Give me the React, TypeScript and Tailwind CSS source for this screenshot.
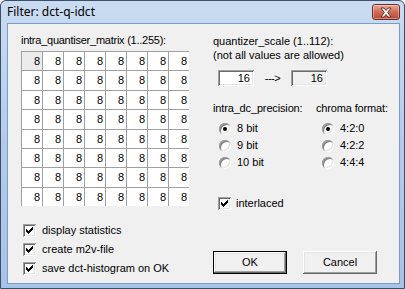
import React from "react";

const sunken =
  "shadow-[inset_1px_1px_0_#a0a0a0,inset_-1px_-1px_0_#ffffff,inset_2px_2px_0_#696969,inset_-2px_-2px_0_#e3e3e3]";

function CheckMark() {
  const px: [number, number, number][] = [
    [6, 0, 1],
    [5, 1, 2],
    [0, 2, 1],
    [4, 2, 3],
    [0, 3, 2],
    [3, 3, 3],
    [0, 4, 5],
    [1, 5, 3],
    [2, 6, 1],
  ];
  return (
    <svg width="7" height="7" viewBox="0 0 7 7" shapeRendering="crispEdges">
      {px.map(([x, y, w], i) => (
        <rect key={i} x={x} y={y} width={w} height={1} fill="#000" />
      ))}
    </svg>
  );
}

function CheckBox({ label, gap = "ml-[6px]" }: { label: string; gap?: string }) {
  return (
    <div className="flex h-[19px] items-center">
      <span className={`flex h-[13px] w-[13px] items-center justify-center bg-white ${sunken}`}>
        <CheckMark />
      </span>
      <span className={`${gap} leading-[13px]`}>{label}</span>
    </div>
  );
}

function Radio({ label, checked }: { label: string; checked?: boolean }) {
  return (
    <div className="flex h-[17px] items-center pl-[6px]">
      <span className="relative h-[12px] w-[12px] rounded-full bg-white shadow-[inset_1px_1px_0_#a0a0a0,inset_-1px_-1px_0_#ffffff,inset_2px_2px_0_#808080,inset_-2px_-2px_0_#e3e3e3]">
        {checked && (
          <span className="absolute left-[4px] top-[4px] h-[4px] w-[4px] rounded-full bg-black" />
        )}
      </span>
      <span className="ml-[6px] leading-[13px]">{label}</span>
    </div>
  );
}

function CloseIcon() {
  return (
    <svg width="14" height="11" viewBox="0 0 14 11">
      <path
        d="M2 1 L5 1 L7 3.5 L9 1 L12 1 L8.6 5.5 L12 10 L9 10 L7 7.5 L5 10 L2 10 L5.4 5.5 Z"
        fill="#ffffff"
        stroke="#5a2a22"
        strokeWidth="0.9"
        strokeLinejoin="round"
      />
    </svg>
  );
}

export default function App() {
  const rows = ["h-[19px]", "h-[20px]", "h-[19px]", "h-[20px]", "h-[19px]", "h-[19px]", "h-[20px]", "h-[19px]"];
  return (
    <div className="h-[289px] w-[405px] overflow-hidden bg-white">
      <div className="flex h-[289px] w-[405px] flex-col rounded-t-[6px] border border-[#3c4f68] bg-gradient-to-b from-[#cadcf2] via-[#b3cbea] to-[#a6c3e8] font-['Liberation_Sans',Arial,sans-serif] text-[11px] text-black">
        {/* Title bar */}
        <div className="flex h-[22px] items-center pl-[6px] pr-[4px]">
          <span className="font-['Noto_Sans',sans-serif] text-[12px] leading-[16px] text-black">
            Filter: dct-q-idct
          </span>
          <span className="ml-auto flex h-[16px] w-[28px] items-center justify-center rounded-[3px] border border-[#6b2f28] bg-gradient-to-b from-[#e8a99b] via-[#d06b58] to-[#b94a33] shadow-[inset_0_0_0_1px_rgba(255,255,255,0.35)]">
            <CloseIcon />
          </span>
        </div>
        {/* Content */}
        <div className="ml-[6px] mr-[4px] mb-[4px] flex flex-1 border border-[#7d9cc4] bg-[#f0f0f0] pl-[13px] pt-[10px]">
          {/* Left column */}
          <div className="flex w-[168px] flex-col">
            <div className="h-[13px] leading-[13px] tracking-[-0.25px]">intra_quantiser_matrix (1..255):</div>
            <div className="mt-[4px] flex flex-col">
              {rows.map((h, r) => (
                <div key={r} className={`flex ${h}`}>
                  {Array.from({ length: 8 }).map((_, c) => (
                    <div
                      key={c}
                      className={`flex w-[21px] items-center justify-end border-l border-t border-[#a0a0a0] pr-[2px] leading-[13px] ${
                        r === 0 && c === 0 ? "bg-[#ececec]" : "bg-white"
                      }`}
                    >
                      8
                    </div>
                  ))}
                </div>
              ))}
            </div>
            <div className="mt-[15px] flex flex-col pl-[2px]">
              <CheckBox label="display statistics" />
              <CheckBox label="create m2v-file" />
              <CheckBox label="save dct-histogram on OK" />
            </div>
          </div>
          {/* Right column */}
          <div className="ml-[24px] flex flex-col">
            <div className="leading-[14px]">quantizer_scale (1..112):</div>
            <div className="leading-[14px]">(not all values are allowed)</div>
            <div className="mt-[8px] flex items-center pl-[5px]">
              <div className={`flex h-[16px] w-[36px] items-center justify-end bg-white pr-[4px] leading-[13px] ${sunken}`}>
                16
              </div>
              <div className="flex w-[37px] justify-center leading-[13px] tracking-[-0.5px]">---&gt;</div>
              <div className={`flex h-[16px] w-[36px] items-center justify-end bg-[#f0f0f0] pr-[4px] leading-[13px] ${sunken}`}>
                16
              </div>
            </div>
            <div className="mt-[16px] flex">
              <div className="flex w-[103px] flex-col">
                <div className="h-[13px] leading-[13px] tracking-[-0.15px]">intra_dc_precision:</div>
                <div className="mt-[5px] flex flex-col">
                  <Radio label="8 bit" checked />
                  <Radio label="9 bit" />
                  <Radio label="10 bit" />
                </div>
              </div>
              <div className="flex flex-col">
                <div className="h-[13px] leading-[13px] tracking-[-0.15px]">chroma format:</div>
                <div className="mt-[5px] flex flex-col">
                  <Radio label="4:2:0" checked />
                  <Radio label="4:2:2" />
                  <Radio label="4:4:4" />
                </div>
              </div>
            </div>
            <div className="mt-[23px] pl-[5px]">
              <CheckBox label="interlaced" gap="ml-[5px]" />
            </div>
            <div className="mt-[38px] flex gap-[16px]">
              <button className="flex h-[23px] w-[74px] items-center justify-center border border-black bg-[#f0f0f0] leading-[13px] shadow-[inset_-1px_-1px_0_#696969,inset_1px_1px_0_#ffffff,inset_-2px_-2px_0_#a0a0a0,inset_2px_2px_0_#e3e3e3]">
                OK
              </button>
              <button className="flex h-[23px] w-[74px] items-center justify-center bg-[#f0f0f0] leading-[13px] shadow-[inset_-1px_-1px_0_#696969,inset_1px_1px_0_#ffffff,inset_-2px_-2px_0_#a0a0a0,inset_2px_2px_0_#e3e3e3]">
                Cancel
              </button>
            </div>
          </div>
        </div>
      </div>
    </div>
  );
}
